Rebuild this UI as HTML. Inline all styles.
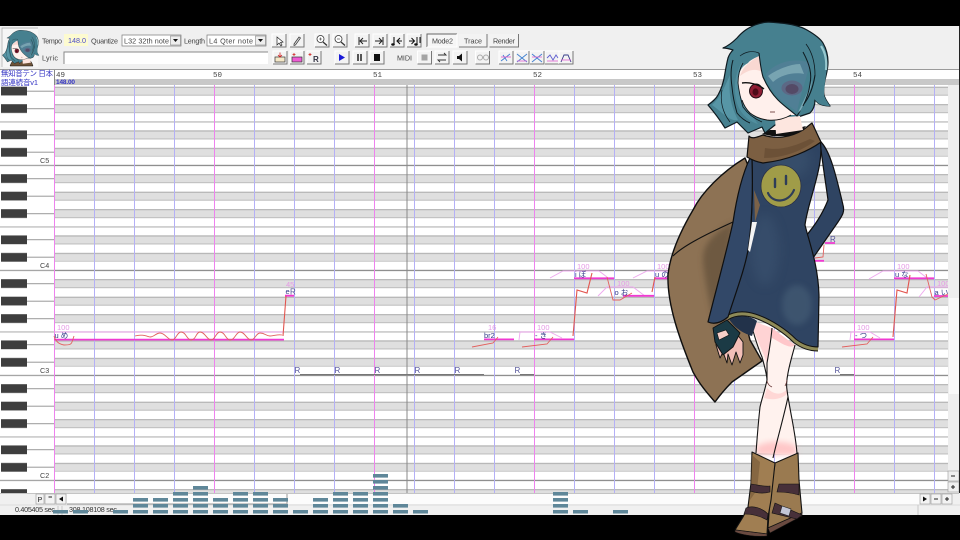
<!DOCTYPE html>
<html><head><meta charset="utf-8"><title>Piano roll</title>
<style>
html,body{margin:0;padding:0;background:#000;width:960px;height:540px;overflow:hidden}
svg{display:block;filter:blur(.3px)}
text{font-family:"Liberation Sans","Noto Sans CJK JP",sans-serif}
.t{font-size:7.2px;fill:#444}
.n{font-size:7.5px;fill:#333a88}
.v{font-size:7.5px;fill:#e59ae5}
.r{font-size:8px;fill:#55559a}
.m{font-size:7.5px;fill:#444;font-family:"Liberation Mono",monospace}
</style></head><body>
<svg width="960" height="540" viewBox="0 0 960 540" xmlns="http://www.w3.org/2000/svg">
<defs>
<pattern id="rows" patternUnits="userSpaceOnUse" x="0" y="156.7" width="960" height="105">
 <rect width="960" height="105" fill="#fff"/>
 <g fill="#dfdfdf">
 <rect y="17.5" width="960" height="8.75"/><rect y="35" width="960" height="8.75"/><rect y="52.5" width="960" height="8.75"/><rect y="78.75" width="960" height="8.75"/><rect y="96.25" width="960" height="8.75"/>
 </g>
 <path d="M0 18H960M0 35.5H960M0 53H960M0 79.2H960M0 96.7H960" stroke="#a9a9a9" stroke-width="1"/>
 <path d="M0 26H960M0 43.5H960M0 61H960M0 87.2H960M0 104.7H960" stroke="#bcbcbc" stroke-width="1"/>
 <path d="M0 70.2H960" stroke="#aaa" stroke-width="1"/>
 <path d="M0 8.7H960" stroke="#6a6a6a" stroke-width="1"/>
</pattern>
<pattern id="keys" patternUnits="userSpaceOnUse" x="0" y="156.7" width="54" height="105">
 <rect width="54" height="105" fill="#fff"/>
 <path d="M27 22H54M27 39.5H54M27 57H54M27 83H54M27 100.5H54" stroke="#999" stroke-width="1"/>
 <path d="M0 70.2H54" stroke="#aaa" stroke-width="1"/>
 <path d="M0 8.7H54" stroke="#888" stroke-width="1"/>
 <g fill="#3e3e3e"><rect x="1" y="17.5" width="26" height="8.75"/><rect x="1" y="35" width="26" height="8.75"/><rect x="1" y="52.5" width="26" height="8.75"/><rect x="1" y="78.75" width="26" height="8.75"/><rect x="1" y="96.25" width="26" height="8.75"/></g>
</pattern>
<pattern id="lv" patternUnits="userSpaceOnUse" x="0" y="510" width="20" height="6">
 <rect width="20" height="3.6" fill="#5f8799"/>
</pattern>
<g id="b"><rect width="14" height="13" fill="#f3f3f3"/><path d="M0 13V0H14" fill="none" stroke="#fff"/><path d="M0 13H14V0" fill="none" stroke="#777" stroke-width="1"/></g>
<g id="sel"><rect width="10" height="9" fill="#eee" stroke="#888" stroke-width=".6"/><path d="M2.5 3H7.5L5 6Z" fill="#111"/></g>
<filter id="s2" x="-30%" y="-30%" width="160%" height="160%"><feGaussianBlur stdDeviation="3"/></filter>
<filter id="s5" x="-40%" y="-40%" width="180%" height="180%"><feGaussianBlur stdDeviation="5"/></filter>
<g id="head">
 <path d="M723,48 C728,46 733,42 737,38 C743,31 748,28 755,25 C765,21 772,22 780,23 C792,24 800,26 807,30 C814,34 820,38 823,43 C827,50 828,56 828,62 C828,70 826,75 825,80 C824,85 823,90 824,95 C825,99 828,103 830,106 C825,106 821,105 818,103 L815,100 C815,105 813,110 810,113 L798,117 L775,125 L765,133 L762,127 L748,133 L743,128 L737,122 L725,128 C720,120 714,112 708,105 C712,102 716,99 718,95 C722,88 724,80 725,73 C726,67 727,62 728,58 C729,55 731,52 733,50 C730,49 726,48 723,48Z" fill="#46808f" stroke="#0e1a20" stroke-width="1.200" stroke-linejoin="round"/>
 <path d="M712,105 C722,112 730,122 738,120 C732,108 728,96 730,75 C724,88 720,98 712,105Z" fill="#5e9eae" opacity=".75"/>
 <path d="M742,62 C734,75 733,92 738,106 C742,115 750,122 758,124 C748,110 741,92 746,68Z" fill="#5798a8" opacity=".6"/>
 <path d="M775,118 L800,116 L803,130 L776,134Z" fill="#fde6df"/>
 <path d="M759,56 C755,58 750,60 748,63 C742,66 739,72 738,77 C737,85 739,92 742,100 C744,106 747,110 750,113 C755,117 761,119 767,120 C776,121 784,119 791,115 L797,115 L763,77Z" fill="#fff0ec"/>
 <path d="M748,64 C752,60 756,58 759,56 L763,77 L762,72 C755,68 748,70 740,76 C742,70 745,66 748,64Z" fill="#f5c8c2" opacity=".6"/>
 <ellipse cx="756" cy="91" rx="6.500" ry="7" fill="#8e1d33" stroke="#1a0a10" stroke-width=".9"/>
 <ellipse cx="755.500" cy="92" rx="3" ry="3.600" fill="#4d0a18"/>
 <path d="M742,83 C749,82 758,84 764,89" fill="none" stroke="#111" stroke-width="1.400"/>
 <path d="M770,112 L775,112" stroke="#704040" stroke-width=".9"/>
 <path d="M742,100 C744,106 747,110 750,113 C755,117 761,119 767,120 C776,121 784,119 791,115" fill="none" stroke="#111" stroke-width=".9"/>
 <path d="M759,53 C765,35 785,26 805,32 C818,38 826,50 827,62 C827,72 824,85 824,95 C825,99 828,103 830,106 C825,106 821,105 818,103 L815,100 C815,92 816,84 815,75 C813,88 809,98 803,105 C801,109 799,113 797,116 C790,110 784,106 778,100 C772,94 767,86 763,77 C761,70 760,62 759,53Z" fill="#46808f"/>
 <path d="M759,53 C760,62 761,70 763,77 C767,86 772,94 778,100 C784,106 790,110 797,116 C799,113 801,109 803,105 C809,98 813,88 815,75" fill="none" stroke="#0e1a20" stroke-width="1.100"/>
 <path d="M766,74 C775,62 795,57 810,63 C806,80 800,96 797,112 C790,106 783,102 778,97 C772,90 767,82 766,74Z" fill="#527f96" opacity=".85"/>
 <path d="M768,76 C776,70 790,64 800,64 L804,74 C795,72 782,74 773,82Z" fill="#86b0bb" opacity=".75"/>
 <ellipse cx="792" cy="88" rx="10.500" ry="7.500" fill="#5c6885"/>
 <ellipse cx="792" cy="89" rx="6.500" ry="5" fill="#544a66"/>
 <path d="M798,113 C801,105 806,97 810,86 L812,80 C811,92 806,100 801,110Z" fill="#78a9b6"/>
 <path d="M803,52 C810,65 812,74 810,84 C809,92 806,100 803,106" fill="none" stroke="#0e1a20" stroke-width="1"/>
 <path d="M815,75 C815,62 812,52 806,44" fill="none" stroke="#0e1a20" stroke-width=".8"/>
 <path d="M733,60 C730,70 731,80 732,87 C733,98 735,106 737,113 C741,118 745,121 750,123" fill="none" stroke="#0e1a20" stroke-width="1"/>
 <path d="M743,63 C739,70 738,76 738,83 C739,92 741,100 743,107 C748,114 755,119 762,122" fill="none" stroke="#0e1a20" stroke-width=".9"/>
 <path d="M722,90 C720,100 722,112 730,122" fill="none" stroke="#0e1a20" stroke-width=".7"/>
 <path d="M759,53 C752,50 745,52 740,56" fill="none" stroke="#0e1a20" stroke-width=".7"/>
 <path d="M821,46 C825,52 827,60 826,70" fill="none" stroke="#97c8cf" stroke-width="2.200"/>
</g>
</defs>

<rect width="960" height="540" fill="#000"/>
<rect x="0" y="26" width="960" height="489" fill="#f0f0f0"/>

<!-- grid -->
<rect x="54" y="85" width="894" height="408" fill="url(#rows)"/>
<rect x="0" y="85" width="54" height="408" fill="url(#keys)"/>
<path d="M94.5 85V493M134.5 85V493M174.5 85V493M254.5 85V493M294.5 85V493M334.5 85V493M414.5 85V493M454.5 85V493M494.5 85V493M574.5 85V493M614.5 85V493M654.5 85V493M734.5 85V493M774.5 85V493M814.5 85V493M894.5 85V493M934.5 85V493" stroke="#b4b0f6" stroke-width="1"/>
<path d="M54.5 85V493M214.5 85V493M374.5 85V493M534.5 85V493M694.5 85V493M854.5 85V493" stroke="#ee82ee" stroke-width="1"/>
<path d="M407 85V493" stroke="#888" stroke-width="1"/>
<text x="40" y="163" class="t">C5</text><text x="40" y="268" class="t">C4</text><text x="40" y="373" class="t">C3</text><text x="40" y="478" class="t">C2</text>

<!-- ruler -->
<rect x="0" y="69" width="960" height="1" fill="#9a9a9a"/>
<rect x="54" y="70" width="906" height="9" fill="#fff"/>
<rect x="54" y="79" width="906" height="6" fill="#c8c8c8"/>
<rect x="0" y="70" width="54" height="15" fill="#fff"/>
<path d="M54.5 70V85" stroke="#888"/>
<text x="1" y="76" style="font-size:7.5px;fill:#3434c4" textLength="52">無知音テン 日本</text>
<text x="1" y="85" style="font-size:7.5px;fill:#3434c4" textLength="37">語連続音v1</text>
<text class="m" x="56" y="77">49</text><text class="m" x="213" y="77">50</text><text class="m" x="373" y="77">51</text><text class="m" x="533" y="77">52</text><text class="m" x="693" y="77">53</text><text class="m" x="853" y="77">54</text>
<text x="56" y="84" style="font-size:6.5px;fill:#3434c4;font-weight:bold" textLength="19">148.00</text>

<!-- rests -->
<text class="r" x="294.5" y="373">R</text><text class="r" x="334.5" y="373">R</text><text class="r" x="374.5" y="373">R</text><text class="r" x="414.5" y="373">R</text><text class="r" x="454.5" y="373">R</text><text class="r" x="514.5" y="373">R</text><text class="r" x="834.5" y="373">R</text>
<path d="M300 374.5H484M520 374.5H534M840 374.5H854" stroke="#777" stroke-width=".9"/>

<!-- pink envelopes -->
<g fill="none" stroke="#eea8ee" stroke-width=".9">
<path d="M54 332H284"/>
<path d="M519 340L520 332H550L562 338"/>
<path d="M550 278L563 271H599L607 277"/>
<path d="M598 296L607 287H633L645 296"/>
<path d="M633 278L647 271H670"/>
<path d="M850 340L851 332H870L880 338"/>
<path d="M869 279L883 271H918L927 278"/>
<path d="M919 297L927 287H948"/>
</g>
<!-- notes -->
<g stroke="#f03ad2" stroke-width="1.8" fill="none">
<path d="M54 339.6H284M285 295.7H294M484 339.4H514M534 339.4H574M574 278.3H614M623 295.8H654M655 278.3H668M825 243H835M813 260.8H824M854 339.4H894M894 278.3H934M934 296H948"/>
</g>
<!-- pitch -->
<g fill="none" stroke="#e2605e" stroke-width=".9">
<path d="M54 336C56 342 59 344 64 345C68 345 71 345 72 342L74 336"/>
<path d="M135 336C141 334 146 336 150 337C154 337 156 333 160 333C165 333 168 340 172 340C176 340 177 332 181 332C186 332 187 340 191 340C196 340 196 332 200 332C205 332 207 340 211 340C215 340 216 332 220 332C225 332 226 340 230 340C235 340 236 332 240 332C245 332 247 340 251 340C255 340 256 333 260 333C265 333 266 336 270 336C274 336 278 334 282 335"/>
<path d="M472 347L493 343L498 337"/>
<path d="M522 347L547 344L553 337"/>
<path d="M607 277L613 300L620 300L632 293"/>
<path d="M824 245L823 257L815 258"/>
<path d="M842 347L867 344L873 337"/>
<path d="M926 274L932 297L935 300L948 294"/>
</g>
<g fill="none" stroke="#e2554f" stroke-width="1.1">
<path d="M283 336L286 296"/>
<path d="M573 336L577 290L587 293L592 273"/>
<path d="M652 292L655 277"/>
<path d="M893 337L897 290L907 293L910 275"/>
</g>
<!-- note labels -->
<text class="v" x="57" y="330">100</text><text class="n" x="54.5" y="338">u め</text>
<text class="v" x="286" y="287">45</text><text class="n" x="285.5" y="294">e</text><text class="r" x="290" y="294.5">R</text>
<text class="v" x="488" y="330">16</text><text class="n" x="484" y="338">br2</text>
<text class="v" x="537" y="330">100</text><text class="n" x="535" y="338">- き</text>
<text class="v" x="577" y="269">100</text><text class="n" x="575" y="277">i ぼ</text>
<text class="v" x="617" y="286">100</text><text class="n" x="614.5" y="295">o お</text>
<text class="v" x="657" y="269">100</text><text class="n" x="655" y="277">u の</text>
<text class="r" x="830" y="242">R</text>
<text class="v" x="857" y="330">100</text><text class="n" x="855" y="338">- つ</text>
<text class="v" x="897" y="269">100</text><text class="n" x="895" y="277">u な</text>
<text class="v" x="937" y="286">100</text><text class="n" x="934.5" y="295">a い</text>

<!-- right scrollbar -->
<rect x="948" y="85" width="11" height="408" fill="#eeeeee"/>
<rect x="949" y="298" width="10" height="96" fill="#f9f9f9"/>
<rect x="948" y="471" width="11" height="10" fill="#efefef" stroke="#999" stroke-width=".6"/><path d="M951 476H955" stroke="#222"/>
<rect x="948" y="482" width="11" height="10" fill="#efefef" stroke="#999" stroke-width=".6"/><path d="M951 487H955M953 485V489" stroke="#222"/>
<rect x="959" y="26" width="1" height="489" fill="#222"/>

<!-- bottom -->
<rect x="0" y="493" width="960" height="22" fill="#f0f0f0"/>
<rect x="0" y="493" width="959" height="1" fill="#c4c4c4"/>
<rect x="67" y="494" width="853" height="10" fill="#fcfcfc"/>
<path d="M67 504H287V494" fill="none" stroke="#999"/>
<rect x="36" y="494" width="8" height="10" fill="#f3f3f3" stroke="#999" stroke-width=".6"/><text x="37.5" y="502" class="t" style="fill:#222">P</text>
<rect x="45" y="494" width="10" height="10" fill="#f3f3f3" stroke="#999" stroke-width=".6"/><path d="M48.500 497H52" stroke="#222"/>
<rect x="56" y="494" width="10" height="10" fill="#f3f3f3" stroke="#999" stroke-width=".6"/><path d="M63 496.500V501.500L59 499Z" fill="#111"/>
<rect x="920" y="494" width="10" height="10" fill="#f3f3f3" stroke="#999" stroke-width=".6"/><path d="M923 496.500V501.500L927 499Z" fill="#111"/>
<rect x="931" y="494" width="10" height="10" fill="#f3f3f3" stroke="#999" stroke-width=".6"/><path d="M934 499H938" stroke="#222"/>
<rect x="942" y="494" width="10" height="10" fill="#f3f3f3" stroke="#999" stroke-width=".6"/><path d="M945 499H949M947 497V501" stroke="#222"/>
<path d="M0 505H960" stroke="#dcdcdc"/>
<path d="M58 506V515M62 506V515M918 505V515" stroke="#c8c8c8"/>
<text class="t" x="15" y="512" textLength="40" style="fill:#333">0.405405 sec</text>
<text class="t" x="69" y="512" textLength="48" style="fill:#333">308.108108 sec</text>

<!-- level bars -->
<g fill="url(#lv)">
<rect x="53" y="510" width="15" height="3.6"/><rect x="73" y="510" width="15" height="3.6"/><rect x="113" y="510" width="15" height="3.6"/>
<rect x="133" y="498" width="15" height="15.6"/><rect x="153" y="498" width="15" height="15.6"/><rect x="173" y="492" width="15" height="21.6"/><rect x="193" y="486" width="15" height="27.6"/><rect x="213" y="498" width="15" height="15.6"/><rect x="233" y="492" width="15" height="21.6"/><rect x="253" y="492" width="15" height="21.6"/><rect x="273" y="498" width="15" height="15.6"/><rect x="293" y="510" width="15" height="3.6"/><rect x="313" y="498" width="15" height="15.6"/><rect x="333" y="492" width="15" height="21.6"/><rect x="353" y="492" width="15" height="21.6"/><rect x="373" y="474" width="15" height="39.6"/><rect x="393" y="504" width="15" height="9.6"/><rect x="413" y="510" width="15" height="3.6"/>
<rect x="553" y="492" width="15" height="21.6"/><rect x="573" y="510" width="15" height="3.6"/><rect x="613" y="510" width="15" height="3.6"/>
</g>

<!-- toolbar -->
<text class="t" x="42" y="43.500" textLength="20">Tempo</text>
<rect x="64" y="34" width="24" height="12" fill="#fdfbd0"/>
<text x="68" y="43" style="font-size:7.2px;fill:#4a4ac8" textLength="18">148.0</text>
<text class="t" x="91" y="43.500" textLength="27">Quantize</text>
<rect x="122" y="35" width="59" height="11" fill="#fff" stroke="#777" stroke-width=".7"/>
<text class="t" x="124" y="43.500" textLength="45">L32 32th note</text>
<use href="#sel" x="170.500" y="36"/>
<text class="t" x="184" y="43.500" textLength="21">Length</text>
<rect x="207" y="35" width="59" height="11" fill="#fff" stroke="#777" stroke-width=".7"/>
<text class="t" x="209" y="43.500" textLength="44">L4  Qter note</text>
<use href="#sel" x="255.500" y="36"/>
<text class="t" x="42" y="60.500" textLength="16">Lyric</text>
<rect x="64" y="52" width="204" height="12" fill="#fff"/>
<path d="M64 64V52H268" fill="none" stroke="#888"/>

<use href="#b" x="272" y="34"/><path d="M277 37V45L279 43L281 46L282 45L280.500 42.500L283 42Z" fill="#fff" stroke="#222" stroke-width=".7"/>
<use href="#b" x="290" y="34"/><path d="M294 44L299 37L300.500 38L295.500 45L294 45.500Z" fill="#ddd" stroke="#333" stroke-width=".7"/>
<use href="#b" x="315" y="34"/><circle cx="320.500" cy="39" r="3.500" fill="#fff" stroke="#333" stroke-width=".8"/><path d="M323 42L327 45.500" stroke="#333" stroke-width="1.300"/><path d="M319 39H322M320.500 37.500V40.500" stroke="#333" stroke-width=".6"/>
<use href="#b" x="333" y="34"/><circle cx="338.500" cy="39" r="3.500" fill="#fff" stroke="#333" stroke-width=".8"/><path d="M341 42L345 45.500" stroke="#333" stroke-width="1.300"/><path d="M337 39H340" stroke="#333" stroke-width=".6"/>
<use href="#b" x="355" y="34"/><path d="M359 37V45M367 41H360M363 38L360 41L363 44" fill="none" stroke="#222"/>
<use href="#b" x="373" y="34"/><path d="M383 37V45M375 41H382M379 38L382 41L379 44" fill="none" stroke="#222"/>
<use href="#b" x="390" y="34"/><path d="M394 37V44M394 44L392.500 45M400 38L397 41L400 44M402 41H397" fill="none" stroke="#111" stroke-width="1.100"/><ellipse cx="393" cy="44.500" rx="1.800" ry="1.200" fill="#111"/>
<use href="#b" x="407" y="34"/><path d="M417 37V44M409 41H414M411.500 38L414.500 41L411.500 44M420 37V43" fill="none" stroke="#111"/><ellipse cx="416" cy="44.500" rx="1.800" ry="1.200" fill="#111"/>

<rect x="427" y="34" width="30" height="13" fill="#f6f6f6"/><path d="M427 47V34H457" fill="none" stroke="#666"/><path d="M427 47H457V34" fill="none" stroke="#fff"/>
<text class="t" x="432" y="43.500" textLength="21">Mode2</text>
<rect x="459" y="34" width="28" height="13" fill="#f3f3f3"/><path d="M459 47H487V34" fill="none" stroke="#777"/>
<text class="t" x="464" y="43.500" textLength="18">Trace</text>
<rect x="489.500" y="34" width="29" height="13" fill="#f3f3f3"/><path d="M489.500 47H518.500V34" fill="none" stroke="#777"/>
<text class="t" x="493" y="43.500" textLength="22">Render</text>

<use href="#b" x="273" y="51"/><rect x="275" y="57" width="10" height="5" fill="#f4e8c8" stroke="#333" stroke-width=".7"/><path d="M280 52.500V57M278 55L280 57L282 55" fill="none" stroke="#d02020" stroke-width=".8"/>
<use href="#b" x="290" y="51"/><rect x="292" y="57" width="10" height="5" fill="#ee5cd4" stroke="#333" stroke-width=".7"/><path d="M294 53V56M292.500 54.500H295.500" stroke="#d02020" stroke-width=".8"/>
<use href="#b" x="307" y="51"/><text x="313" y="62" style="font-size:8px;fill:#334;font-weight:bold">R</text><path d="M310 53V56M308.500 54.500H311.500" stroke="#d02020" stroke-width=".8"/>
<use href="#b" x="335" y="51"/><path d="M339 54V61L345 57.500Z" fill="#1a1ad8"/>
<use href="#b" x="353" y="51"/><path d="M358 54V61M361 54V61" stroke="#222" stroke-width="1.500"/>
<use href="#b" x="370" y="51"/><rect x="374" y="54" width="6" height="7" fill="#111"/>
<text class="t" x="397" y="60.500" textLength="15">MIDI</text>
<use href="#b" x="417.500" y="51"/><rect x="421.500" y="54.500" width="6" height="6" fill="#a4a4a4"/>
<use href="#b" x="435" y="51"/><path d="M438 55H446L444 53M446 60H438L440 62" fill="none" stroke="#333" stroke-width=".9"/>
<use href="#b" x="453" y="51"/><path d="M457 56H459L462 53.500V61.500L459 59H457Z" fill="#111"/>
<use href="#b" x="475.500" y="51"/><circle cx="480" cy="57.500" r="2.500" fill="none" stroke="#aaa"/><circle cx="486" cy="57.500" r="2.500" fill="none" stroke="#aaa"/>
<use href="#b" x="499" y="51"/><path d="M501 61L510 54M503 55L507 61" fill="none" stroke="#4080d0" stroke-width=".9"/><path d="M501 57L511 57" stroke="#e060d0" stroke-width=".9"/>
<use href="#b" x="515" y="51"/><path d="M517 54L527 62M527 54L517 62" stroke="#4080d0" stroke-width=".9"/><path d="M517 61H527" stroke="#e060d0" stroke-width=".8"/>
<use href="#b" x="530" y="51"/><path d="M532 54L542 62M542 54L532 62" stroke="#4080d0" stroke-width=".9"/><path d="M532 57H542" stroke="#e060d0" stroke-width=".8"/>
<use href="#b" x="545" y="51"/><path d="M547 58L550 55L553 60L556 55L558 58" fill="none" stroke="#6060d0" stroke-width=".9"/><path d="M547 61H558" stroke="#e060d0" stroke-width=".8"/>
<use href="#b" x="559" y="51"/><path d="M561 62L564 55H568L571 62" fill="none" stroke="#333a88" stroke-width=".9"/><path d="M561 60H571" stroke="#e060d0" stroke-width=".8"/>

<!-- avatar -->
<rect x="2" y="29" width="36" height="38" fill="#f6f6f6"/>
<path d="M2 67V28H38" fill="none" stroke="#aaa" stroke-width=".7"/>
<svg x="2" y="29" width="36" height="38" viewBox="2 29 36 38">
 <path d="M10 66C12 60 16 57 21 57C26 57 31 59 33 66Z" fill="#6e5338" stroke="#111" stroke-width=".5"/>
 <use href="#head" transform="translate(-210 23.600) scale(.3)"/>
</svg>

<!-- ============ character ============ -->
<!-- cloak -->
<path d="M745,158 C722,172 702,192 693,210 C680,232 670,255 668,275 C667,305 680,340 693,372 C700,385 708,394 715,402 C720,395 726,388 732,382 L762,361 L750,340 L745,320 L762,200 Z" fill="#8d7254" stroke="#0f0f0f" stroke-width="1.400" stroke-linejoin="round"/>
<path d="M733,222 C712,234 702,245 703,262 C706,290 712,312 716,330 L726,285 Z" fill="#5a4836" opacity=".6" filter="url(#s2)"/>
<path d="M673,256 C682,247 700,237 733,222" fill="none" stroke="#111" stroke-width="1.100"/>
<!-- legs -->
<path d="M750,320 C754,335 758,348 762,357 C765,368 767,375 767,380 C765,390 762,398 760,407 C758,425 757,440 756,453 L797,455 C796,435 790,412 787,390 C786,384 787,378 788,373 C790,362 793,353 795,345 C785,338 778,332 772,328 Z" fill="#fff2ee"/>
<path d="M750,320 L772,328 C771,340 769,352 767,363 C762,350 755,335 750,320Z" fill="#ffcfd0" opacity=".9"/>
<path d="M772,328 C780,334 788,340 795,345 C790,350 780,342 772,338Z" fill="#ffbcc0" opacity=".8"/>
<path d="M756,447 C765,440 785,440 796,446 L797,455 L757,455Z" fill="#ffb5b8" opacity=".7" filter="url(#s2)"/>
<path d="M767,388 C775,396 783,395 788,388 L787,394 C780,400 772,400 764,398Z" fill="#ffc4c4" opacity=".6"/>
<g fill="none" stroke="#141414" stroke-width="1.100">
<path d="M750,320 C754,335 758,348 762,357 C765,368 767,375 767,380 C765,390 762,398 760,407 C758,425 757,440 756,453"/>
<path d="M795,345 C793,353 790,362 788,373 C787,378 786,384 787,390 C790,412 796,435 797,454"/>
<path d="M772,328 C771,340 769,352 767,363 C767,370 767,375 767,380"/>
<path d="M788,397 C783,420 777,440 773,458"/>
<path d="M767,381 C768,385 770,386 772,387M785,386 C786,384 787,382 787,380" stroke-width=".8" stroke="#6a3a3a"/>
</g>
<!-- boots -->
<path d="M775,463 L798,453 L799,480 L802,513 L768,528 L770,500Z" fill="#9a7a50" stroke="#111" stroke-width="1.100" stroke-linejoin="round"/>
<path d="M752,452 L775,463 L771,500 L768,517 L767,534 L735,530 L743,517 L748,507 L751,483Z" fill="#a07e52" stroke="#111" stroke-width="1.100" stroke-linejoin="round"/>
<path d="M752,455 L760,462 L757,490 L750,500 L751,483Z" fill="#7a5e3c" opacity=".7"/>
<path d="M735,530 L767,534 L767,536 C755,537 742,535 735,532Z" fill="#6a4a40" stroke="#111" stroke-width=".6"/>
<path d="M768,528 L802,513 L802,516 L770,533Z" fill="#6a4a40" stroke="#111" stroke-width=".6"/>
<path d="M751,484 C758,485 765,487 770,486 L770,492 C763,494 756,493 750,491Z" fill="#473039" stroke="#111" stroke-width=".6"/>
<path d="M779,484 L799,484 L799,495 C792,493 785,492 777,492Z" fill="#473039" stroke="#111" stroke-width=".6"/>
<path d="M746,508 C753,505 762,508 768,514 L767,520 C760,516 752,514 744,514Z" fill="#473039" stroke="#111" stroke-width=".6"/>
<path d="M775,503 L802,515 L797,519 L772,513Z" fill="#473039" stroke="#111" stroke-width=".6"/>
<path d="M782,506 L791,509 L789,516 L780,513Z" fill="#c3c6d6" stroke="#222" stroke-width=".6"/>
<!-- right (viewer) arm -->
<path d="M820,141 C830,150 836,175 843,205 C845,212 842,216 838,222 L813,258 L806,236 C815,225 822,215 828,200 C826,185 822,160 820,141Z" fill="#2f4462" stroke="#0f0f0f" stroke-width="1.200" stroke-linejoin="round"/>
<!-- dress -->
<path d="M752,150 L820,140 C825,165 808,200 805,225 C810,245 818,265 819,295 L818,347 C805,347 795,342 790,335 C775,322 755,312 742,312 C736,313 730,315 727,317 C735,290 745,265 748,250 C752,225 753,190 752,160 Z" fill="#2f4462" stroke="#0f0f0f" stroke-width="1.200" stroke-linejoin="round"/>
<ellipse cx="797" cy="305" rx="15" ry="20" fill="#4a6279" opacity=".55" filter="url(#s2)"/>
<ellipse cx="765" cy="250" rx="14" ry="35" fill="#3c5472" opacity=".5" filter="url(#s5)"/>
<ellipse cx="790" cy="160" rx="20" ry="18" fill="#3e5672" opacity=".5" filter="url(#s5)"/>
<path d="M729,319 C738,315 750,315 757,321 L752,336 C745,334 735,329 729,319Z" fill="#22324a"/>
<path d="M727,318 C735,313 745,313 755,316 C770,321 785,331 795,341 C803,347 810,349 818,349" fill="none" stroke="#111" stroke-width="5"/>
<path d="M727,318 C735,313 745,313 755,316 C770,321 785,331 795,341 C803,347 810,349 818,349" fill="none" stroke="#8e8a58" stroke-width="3"/>
<!-- smiley -->
<ellipse cx="781" cy="186" rx="20" ry="21" fill="#a09c48" stroke="#2a3048" stroke-width=".8"/>
<path d="M775,179V187M786,176V184" stroke="#2e3d58" stroke-width="2.400" stroke-linecap="round"/>
<path d="M768,193 C772,203 788,204 794,190" fill="none" stroke="#2e3d58" stroke-width="2.200" stroke-linecap="round"/>
<!-- left arm -->
<path d="M750,158 C742,175 737,195 733,222 C727,250 716,290 708,322 C715,325 722,322 728,317 C736,292 745,268 748,250 C752,225 753,190 752,160Z" fill="#324868" stroke="#0f0f0f" stroke-width="1.200" stroke-linejoin="round"/>
<path d="M752,222 L757,222 L750,252 L748,250Z" fill="#f4f4f4"/>
<path d="M754,190 L760,205 L755,222Z" fill="#7b6248"/>
<!-- hand -->
<path d="M716,335 L730,325 L743,342 L743,355 L740,363 L736,352 L732,365 L728,354 L727,363 L723,352 L720,358 L716,345Z" fill="#f3bfb8" stroke="#111" stroke-width=".9" stroke-linejoin="round"/>
<path d="M713,328 L727,320 L740,333 L733,347 L723,355 L715,342Z" fill="#1b3a45" stroke="#111" stroke-width=".9" stroke-linejoin="round"/>
<path d="M717,333 L726,330 L729,335 L719,340Z" fill="#f7cfc8" stroke="#111" stroke-width=".6"/>
<!-- scarf -->
<path d="M775,120 L800,118 L804,134 L768,136 Z" fill="#fde8e2"/>
<path d="M762,134 L772,136 L792,136 L803,130 L806,126 L790,130 L770,130Z" fill="#111"/>
<path d="M749,136 C752,140 760,136 763,135 C775,139 790,138 803,130 C806,128 809,125 812,123 C815,129 818,136 821,142 C810,150 790,160 763,163 C757,162 752,160 747,157Z" fill="#7c5f42" stroke="#0f0f0f" stroke-width="1.200" stroke-linejoin="round"/>
<path d="M765,148 C780,151 795,146 810,139 L815,141 C800,152 782,158 764,158Z" fill="#654b33" opacity=".7"/>
<!-- head -->
<use href="#head"/>
</svg>
</body></html>
